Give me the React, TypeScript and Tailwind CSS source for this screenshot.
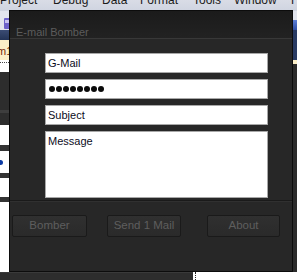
import React from 'react';

// Menu entries of the IDE behind the dialog, with the width each one takes
const MENU = [
  { label: 'Project', w: 'w-[53px]' },
  { label: 'Debug', w: 'w-[49px]' },
  { label: 'Data', w: 'w-[38px]' },
  { label: 'Format', w: 'w-[53px]' },
  { label: 'Tools', w: 'w-[41px]' },
  { label: 'Window', w: 'w-[57px]' },
  { label: 'F', w: 'w-[20px]' },
];

function DialogButton({ label, className }: { label: string; className?: string }) {
  return (
    <button
      className={`h-[22px] flex items-center justify-center rounded-[2px] border border-[#1a1a1a] bg-gradient-to-b from-[#303030] to-[#2a2a2a] text-[11.5px] text-[#5e5e5e] ${className ?? ''}`}
    >
      {label}
    </button>
  );
}

function TextBox({ children }: { children: React.ReactNode }) {
  return (
    <div className="h-[20px] w-[223px] border border-[#a8a8a8] bg-white pl-[2px] text-[11px] leading-[18px] text-[#0c0c1c]">
      {children}
    </div>
  );
}

export default function App() {
  return (
    <div
      className="relative h-[280px] w-[297px] overflow-hidden bg-[#2b2b2b]"
      style={{ fontFamily: '"Liberation Sans", Arial, sans-serif' }}
    >
      {/* IDE in the background */}
      <div className="h-[11px] overflow-hidden bg-gradient-to-b from-[#d9dce6] to-[#cfd4e0]">
        <div className="-mt-[6px] flex text-[12px] leading-[12px] text-[#1b1b1b]">
          {MENU.map((m) => (
            <span key={m.label} className={`${m.w} shrink-0`}>
              {m.label}
            </span>
          ))}
        </div>
      </div>

      <div className="flex">
        {/* left strip */}
        <div className="flex w-[9px] flex-col">
          <div className="relative h-[19px] bg-[#e2e5ee]">
            <div className="absolute left-[4px] top-[7px] h-[11px] w-[6px] rounded-[1px] bg-[#6d62c9]" />
            <div className="absolute left-[5px] top-[9px] h-[3px] w-[4px] bg-[#c9c4f0]" />
          </div>
          <div className="h-[10px] bg-gradient-to-b from-[#3b4c74] to-[#243457]" />
          <div className="h-[20px] overflow-hidden bg-[#fcefc8] pt-[5px] text-[11px] leading-[12px] text-[#7a2b08]">
            <span className="-ml-[3px] block whitespace-nowrap">m1</span>
          </div>
          <div className="h-[12px] bg-white pt-[2px]">
            <div className="border-t border-dotted border-[#444]" />
          </div>
          <div className="h-[38px] bg-[#2d2d2d]" />
          <div className="h-[3px] bg-[#3e3e3e]" />
          <div className="h-[12px] bg-[#2d2d2d]" />
          <div className="h-[20px] bg-white" />
          <div className="h-[6px] bg-[#343434]" />
          <div className="relative h-[22px] bg-white">
            <div className="absolute -left-[2px] top-[9px] h-[5px] w-[5px] rounded-full bg-[#0b3aa4]" />
          </div>
          <div className="h-[5px] bg-[#343434]" />
          <div className="h-[19px] bg-white" />
          <div className="h-[5px] bg-[#343434]" />
          <div className="h-[70px] bg-white" />
        </div>
        <div className="flex-1" />
        {/* right strip */}
        <div className="flex w-[4px] flex-col">
          <div className="h-[9px] bg-[#e2e5ee]" />
          <div className="h-[10px] bg-gradient-to-b from-[#5d7fd6] to-[#2f4ea6]" />
          <div className="h-[30px] bg-[#283a62]" />
          <div className="h-[4px] bg-[#fcefc8]" />
          <div className="h-[208px] bg-[#2b2b2b]" />
        </div>
      </div>

      <div className="flex h-[8px]">
        <div className="w-[193px] border-t border-[#3a3a3a] bg-[#2d2d2d]" />
        <div className="w-[2px] bg-white" />
        <div className="w-[1px] border-l border-dotted border-[#222] bg-white" />
        <div className="flex-1 bg-white" />
      </div>

      {/* E-mail Bomber dialog */}
      <div className="absolute left-[9px] top-[10px] flex h-[262px] w-[284px] flex-col border border-[#0c0c0c] bg-[#272727]">
        <div className="h-[27px] shrink-0 bg-gradient-to-b from-[#1b1b1b] to-[#222] pl-[6px] pt-[15px] text-[11px] leading-[13px] text-[#5c5c5c]">
          E-mail Bomber
        </div>
        <div className="h-[1px] bg-[#383838]" />

        <div className="flex flex-col gap-[6px] pl-[35px] pt-[14px]">
          <TextBox>G-Mail</TextBox>
          <div className="flex h-[20px] w-[223px] items-center gap-[1px] border border-[#a8a8a8] bg-white pl-[3px]">
            {[0, 1, 2, 3, 4, 5, 6, 7].map((i) => (
              <span key={i} className="h-[6px] w-[6px] rounded-full bg-[#0a0a0a]" />
            ))}
          </div>
          <TextBox>Subject</TextBox>
          <div className="h-[67px] w-[223px] border border-[#a8a8a8] bg-white pl-[2px] text-[11px] leading-[18px] text-[#0c0c1c]">
            Message
          </div>
        </div>

        <div className="mt-[2px] border-t border-[#1a1a1a]" />
        <div className="h-[1px] bg-[#303030]" />

        <div className="flex pl-[2px] pt-[13px]">
          <DialogButton label="Bomber" className="w-[75px]" />
          <DialogButton label="Send 1 Mail" className="ml-[20px] w-[74px]" />
          <DialogButton label="About" className="ml-[26px] w-[73px]" />
        </div>
      </div>
    </div>
  );
}
